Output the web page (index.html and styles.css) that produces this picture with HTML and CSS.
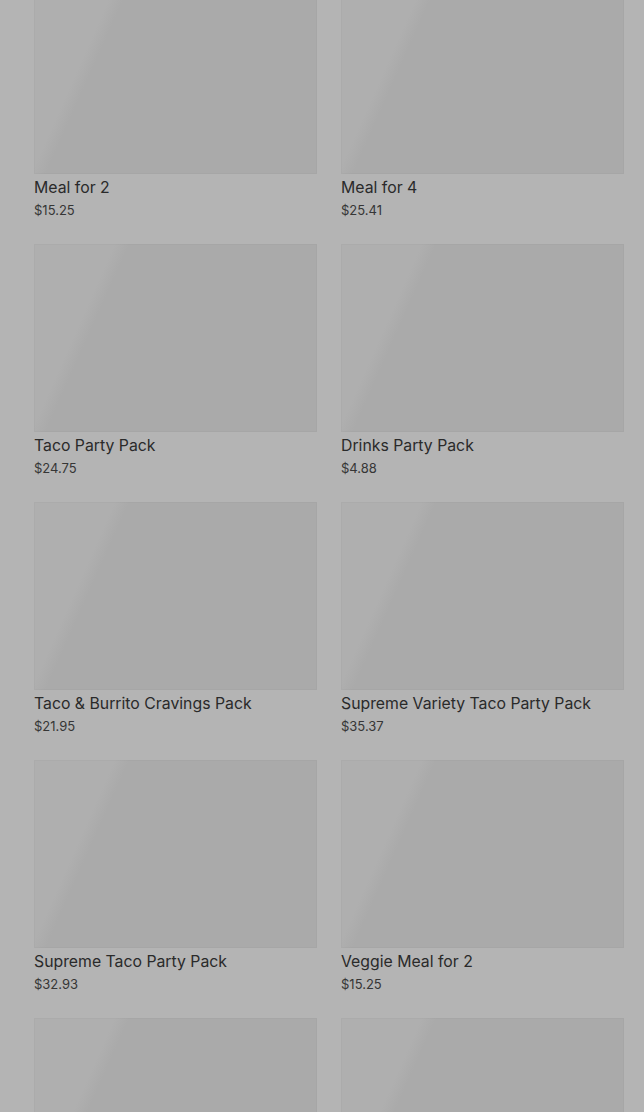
FILE: index.html
```html
<!DOCTYPE html>
<html lang="en">
  <head>
    <meta charset="UTF-8" />
    <title>Party Packs</title>
    <link rel="stylesheet" href="styles.css">
  </head>
  <body>
    <div class="menu-grid">
      <div class="item">
        <div class="item-image"></div>
        <div class="item-name">Meal for 2</div>
        <div class="item-price">$15.25</div>
      </div>
      <div class="item">
        <div class="item-image"></div>
        <div class="item-name">Meal for 4</div>
        <div class="item-price">$25.41</div>
      </div>
      <div class="item">
        <div class="item-image"></div>
        <div class="item-name">Taco Party Pack</div>
        <div class="item-price">$24.75</div>
      </div>
      <div class="item">
        <div class="item-image"></div>
        <div class="item-name">Drinks Party Pack</div>
        <div class="item-price">$4.88</div>
      </div>
      <div class="item">
        <div class="item-image"></div>
        <div class="item-name">Taco &amp; Burrito Cravings Pack</div>
        <div class="item-price">$21.95</div>
      </div>
      <div class="item">
        <div class="item-image"></div>
        <div class="item-name">Supreme Variety Taco Party Pack</div>
        <div class="item-price">$35.37</div>
      </div>
      <div class="item">
        <div class="item-image"></div>
        <div class="item-name">Supreme Taco Party Pack</div>
        <div class="item-price">$32.93</div>
      </div>
      <div class="item">
        <div class="item-image"></div>
        <div class="item-name">Veggie Meal for 2</div>
        <div class="item-price">$15.25</div>
      </div>
      <div class="item">
        <div class="item-image"></div>
      </div>
      <div class="item">
        <div class="item-image"></div>
      </div>
    </div>
  </body>
</html>
```
FILE: styles.css
```css
html,
body {
  height: 100%;
  overflow: hidden;
}
body {
  background: #b4b4b4;
  font-family: Inter, Roboto, "Liberation Sans", Arial, sans-serif;
  margin: 0;
}
.menu-grid {
  display: grid;
  grid-template-columns: 283px 283px;
  column-gap: 24px;
  row-gap: 25px;
  padding: 0 20px 0 34px;
  margin-top: -14px;
}
.item-image {
  height: 188px;
  background: linear-gradient(
    114deg,
    #afafaf 0%,
    #afafaf 22%,
    #aaaaaa 26%,
    #aaaaaa 100%
  );
  box-shadow: inset 0 0 0 1px rgba(0, 0, 0, 0.02);
}
.item-name {
  margin-top: 3px;
  font-size: 15.8px;
  line-height: 21px;
  font-weight: 400;
  color: #2a2a2a;
}
.item-price {
  margin-top: 3px;
  font-size: 13px;
  line-height: 18px;
  color: #363636;
}
```
